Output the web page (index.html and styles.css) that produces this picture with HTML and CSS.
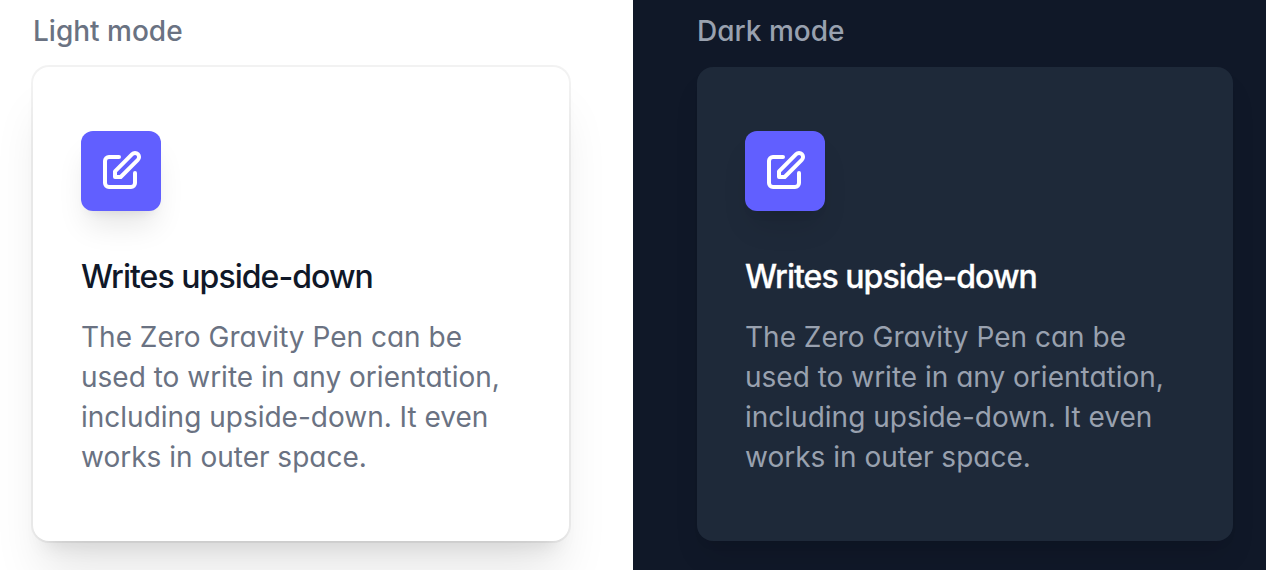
FILE: index.html
```html
<!DOCTYPE html>
<html lang="en">
<head>
<meta charset="utf-8">
<title>Light and dark mode</title>
<link rel="stylesheet" href="styles.css">
</head>
<body>
<main class="comparison">
  <section class="panel light">
    <p class="label">Light mode</p>
    <article class="card">
      <span class="icon-box"><svg class="icon" viewBox="0 0 24 24"><path d="M11 5H6a2 2 0 0 0-2 2v11a2 2 0 0 0 2 2h11a2 2 0 0 0 2-2v-5m-1.414-9.414a2 2 0 1 1 2.828 2.828L11.828 15H9v-2.828l8.586-8.586z"/></svg></span>
      <h3 class="title">Writes upside-down</h3>
      <p class="text">The Zero Gravity Pen can be used to write in any orientation, including upside-down. It even works in outer space.</p>
    </article>
  </section>
  <section class="panel dark">
    <p class="label">Dark mode</p>
    <article class="card">
      <span class="icon-box"><svg class="icon" viewBox="0 0 24 24"><path d="M11 5H6a2 2 0 0 0-2 2v11a2 2 0 0 0 2 2h11a2 2 0 0 0 2-2v-5m-1.414-9.414a2 2 0 1 1 2.828 2.828L11.828 15H9v-2.828l8.586-8.586z"/></svg></span>
      <h3 class="title">Writes upside-down</h3>
      <p class="text">The Zero Gravity Pen can be used to write in any orientation, including upside-down. It even works in outer space.</p>
    </article>
  </section>
</main>
</body>
</html>
```
FILE: styles.css
```css
* { box-sizing: border-box; }
body { margin: 0; overflow: hidden; font-family: Inter, sans-serif; font-feature-settings: "cv11"; }
.comparison { display: grid; grid-template-columns: 1fr 1fr; height: 570px; }
.panel { padding: 11px 64px 0 33px; overflow: hidden; background: #fff; }
.dark { padding: 11px 33px 0 64px; background: #101828; }
.label { margin: 0 0 16px; font-size: 28px; line-height: 40px; font-weight: 500; color: #6a7282; }
.dark .label { color: #99a1af; }
.card { height: 474px; padding: 64px 48px; border-radius: 16px; background: #fff; box-shadow: 0 0 0 2px rgba(0,0,0,.05), 0 40px 50px -10px rgba(0,0,0,.1), 0 16px 20px -12px rgba(0,0,0,.1); }
.dark .card { background: #1e2939; box-shadow: 0 20px 30px -6px rgba(0,0,0,.1), 0 8px 12px -8px rgba(0,0,0,.1); }
.icon-box { display: flex; align-items: center; justify-content: center; width: 80px; height: 80px; border-radius: 12px; background: #615fff; box-shadow: 0 20px 30px -6px rgba(0,0,0,.1), 0 8px 12px -8px rgba(0,0,0,.1); }
.icon { width: 48px; height: 48px; fill: none; stroke: #fff; stroke-width: 2; stroke-linecap: round; stroke-linejoin: round; }
.title { margin: 46px 0 0; font-size: 32px; line-height: 40px; font-weight: 500; letter-spacing: -.96px; color: #101828; }
.dark .title { color: #fff; -webkit-text-stroke: .3px #fff; }
.text { margin: 20px 0 0; font-size: 28px; line-height: 40px; color: #6a7282; }
.dark .text { color: #99a1af; }
```
